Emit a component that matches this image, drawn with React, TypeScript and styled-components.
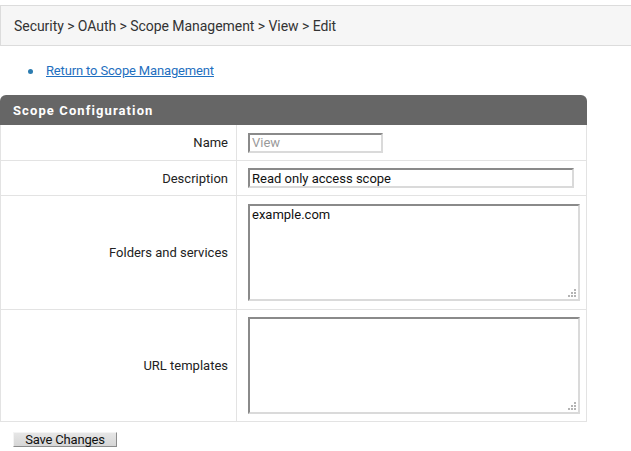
import styled, { createGlobalStyle } from "styled-components";

const Global = createGlobalStyle`
    body {
        margin: 0;
        background: #ffffff;
        font-family: Roboto, "Liberation Sans", sans-serif;
        color: #222;
    }
`;

interface FieldProps {
    $width: number;
}

interface RowProps {
    $height: number;
}

const rows = [
    { label: "Name", height: 36 },
    { label: "Description", height: 35 },
    { label: "Folders and services", height: 114 },
    { label: "URL templates", height: 112 },
];

const App = () => {
    return (
        <>
            <Global />
            <Breadcrumb>Security &gt; OAuth &gt; Scope Management &gt; View &gt; Edit</Breadcrumb>
            <LinkList>
                <li>
                    <a href="#">Return to Scope Management</a>
                </li>
            </LinkList>
            <Panel>
                <Header>Scope Configuration</Header>
                <Grid>
                    <Label $height={rows[0].height}>Name</Label>
                    <Value $height={rows[0].height}>
                        <TextInput $width={135} placeholder="View" />
                    </Value>
                    <Label $height={rows[1].height}>Description</Label>
                    <Value $height={rows[1].height}>
                        <TextInput $width={326} defaultValue="Read only access scope" />
                    </Value>
                    <Label $height={rows[2].height}>Folders and services</Label>
                    <Value $height={rows[2].height}>
                        <TextArea defaultValue="example.com" />
                    </Value>
                    <Label $height={rows[3].height}>URL templates</Label>
                    <Value $height={rows[3].height}>
                        <TextArea />
                    </Value>
                </Grid>
            </Panel>
            <SaveButton>Save Changes</SaveButton>
        </>
    );
};

const Breadcrumb = styled.div`
    margin-top: 5px;
    height: 39px;
    border: 1px solid #dcdcdc;
    border-right: none;
    background: #f6f6f6;
    display: flex;
    align-items: center;
    padding-left: 13px;
    font-size: 14px;
    letter-spacing: -0.05px;
    color: #333;
`;

const LinkList = styled.ul`
    margin: 0;
    padding: 16px 0 0 46px;
    height: 33px;
    box-sizing: border-box;
    list-style: none;
    font-size: 13px;
    li {
        position: relative;
        line-height: 18px;
    }
    li::before {
        content: "";
        position: absolute;
        left: -18px;
        top: 7px;
        width: 5px;
        height: 5px;
        border-radius: 50%;
        background: #2c7cb0;
    }
    a {
        color: #1f6fc0;
        text-decoration: underline;
        letter-spacing: -0.15px;
    }
`;

const Panel = styled.div`
    margin-top: 16px;
    width: 587px;
`;

const Header = styled.div`
    height: 30px;
    background: #666666;
    border-radius: 6px 6px 0 0;
    color: #fff;
    font-weight: 700;
    font-size: 13px;
    letter-spacing: 1.1px;
    display: flex;
    align-items: center;
    padding-left: 13px;
`;

const Grid = styled.div`
    display: grid;
    grid-template-columns: 236px 1fr;
    border-left: 1px solid #e3e3e3;
    border-right: 1px solid #e3e3e3;
`;

const Label = styled.div<RowProps>`
    height: ${(p) => p.$height}px;
    box-sizing: border-box;
    border-bottom: 1px solid #e3e3e3;
    border-right: 1px solid #e3e3e3;
    display: flex;
    align-items: center;
    justify-content: flex-end;
    padding-right: 8px;
    font-size: 13px;
    color: #222;
`;

const Value = styled.div<RowProps>`
    height: ${(p) => p.$height}px;
    box-sizing: border-box;
    border-bottom: 1px solid #e3e3e3;
    display: flex;
    align-items: center;
    padding-left: 11px;
`;

const TextInput = styled.input<FieldProps>`
    width: ${(p) => p.$width}px;
    height: 20px;
    box-sizing: border-box;
    border: 2px solid;
    border-color: #8a8a8a #dadada #dadada #8a8a8a;
    padding: 0 2px;
    font-family: Roboto, "Liberation Sans", sans-serif;
    font-size: 13px;
    color: #111;
    outline: none;
    &::placeholder {
        color: #9a9a9a;
    }
`;

const dot = "linear-gradient(#b4b4b4, #b4b4b4)";

const TextArea = styled.textarea`
    width: 332px;
    height: 97px;
    box-sizing: border-box;
    border: 2px solid;
    border-color: #8a8a8a #dadada #dadada #8a8a8a;
    padding: 1px 2px;
    font-family: Roboto, "Liberation Sans", sans-serif;
    font-size: 13px;
    color: #111;
    outline: none;
    resize: none;
    background-color: #fff;
    background-image: ${dot}, ${dot}, ${dot}, ${dot}, ${dot}, ${dot};
    background-size: 2px 2px;
    background-repeat: no-repeat;
    background-position:
        right 2px bottom 2px,
        right 5px bottom 2px,
        right 8px bottom 2px,
        right 2px bottom 5px,
        right 5px bottom 5px,
        right 2px bottom 8px;
`;

const SaveButton = styled.button`
    margin: 10px 0 0 13px;
    width: 104px;
    height: 15px;
    padding: 0;
    border: 1px solid;
    border-color: #f4f4f4 #8c8c8c #8c8c8c #f4f4f4;
    background: linear-gradient(#e6e6e6, #d6d6d6);
    font-family: Roboto, "Liberation Sans", sans-serif;
    font-size: 13px;
    line-height: 13px;
    letter-spacing: -0.2px;
    color: #111;
    display: block;
`;

export default App;
